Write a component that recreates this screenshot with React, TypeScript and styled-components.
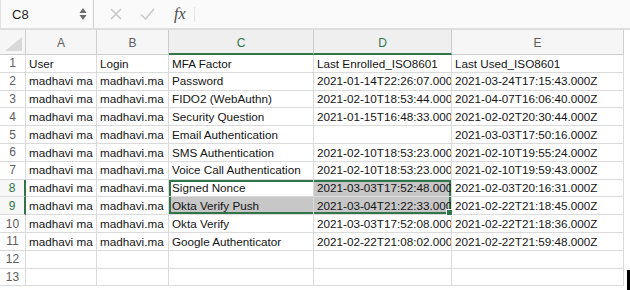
import React from "react";
import styled, {createGlobalStyle, css} from "styled-components";

const GlobalStyle = createGlobalStyle`
  body {
    margin: 0;
    background: #ffffff;
    font-family: "Liberation Sans", Arial, sans-serif;
  }
`;

const GREEN = "#2f7549";
const GRID = "#dadada";
const HEAD_LINE = "#cdcdcd";

const Window = styled.div`
  width: 630px;
  height: 290px;
  overflow: hidden;
  display: flex;
  flex-direction: column;
  background: #ffffff;
`;

const FormulaBar = styled.div`
  display: flex;
  align-items: stretch;
  height: 28px;
  background: #fafafa;
  border-bottom: 2px solid #dedede;
  box-sizing: content-box;
`;

const NameBox = styled.div`
  width: 94px;
  box-sizing: border-box;
  display: flex;
  align-items: center;
  justify-content: space-between;
  padding: 0 6px 0 11px;
  border-left: 1px solid #e2e2e2;
  border-right: 1px solid #cfcfcf;
  font-size: 13px;
  color: #1f1f1f;
`;

const Stepper = styled.svg`
  display: block;
`;

const Actions = styled.div`
  display: flex;
  align-items: center;
  gap: 18px;
  padding: 0 0 0 16px;
`;

const FaintIcon = styled.svg`
  display: block;
`;

const Fx = styled.span`
  font-family: "Liberation Serif", "Times New Roman", serif;
  font-style: italic;
  font-size: 16px;
  color: #4a4a4a;
  margin-left: 1px;
`;

const Divider = styled.div`
  width: 1px;
  height: 15px;
  align-self: center;
  background: #e4e4e4;
  margin-left: 8px;
`;

const FormulaInput = styled.div`
  flex: 1;
`;

const Sheet = styled.div`
  display: flex;
  align-items: flex-start;
`;

const Grid = styled.div`
  display: grid;
  grid-template-columns: 26px 71px 72px 145px 138px 172px;
  grid-template-rows: 25px repeat(13, 17.8px);
  font-size: 11.7px;
  color: #141414;
`;

const Corner = styled.div`
  background: #f6f6f6;
  border-right: 1px solid ${HEAD_LINE};
  border-bottom: 1px solid ${HEAD_LINE};
  display: flex;
  align-items: flex-end;
  justify-content: flex-end;
  padding: 0 3px 3px 0;
`;

const ColHeader = styled.div<{ $active?: boolean }>`
  background: ${p => (p.$active ? "#efefef" : "#f6f6f6")};
  border-right: 1px solid ${HEAD_LINE};
  border-bottom: 1px solid ${HEAD_LINE};
  display: flex;
  align-items: center;
  justify-content: center;
  color: ${p => (p.$active ? GREEN : "#5e5e5e")};
  font-size: 12px;
  padding-top: 2px;
  ${p => p.$active && css`
    border-bottom: 2px solid ${GREEN};
  `}
`;

const RowHeader = styled.div<{ $active?: boolean }>`
  border-right: 1px solid ${GRID};
  border-bottom: 1px solid ${GRID};
  display: flex;
  align-items: center;
  justify-content: center;
  font-size: 12px;
  color: ${p => (p.$active ? GREEN : "#5e5e5e")};
  background: ${p => (p.$active ? "#f7f7f7" : "#ffffff")};
  ${p => p.$active && css`
    border-right: 2px solid ${GREEN};
  `}
`;

type Edges = { top?: boolean; bottom?: boolean; left?: boolean; right?: boolean };

const edgeShadow = (e?: Edges) => {
  if (!e) return "none";
  const parts: string[] = [];
  if (e.top) parts.push(`inset 0 2px 0 ${GREEN}`);
  if (e.bottom) parts.push(`inset 0 -2px 0 ${GREEN}`);
  if (e.left) parts.push(`inset 2px 0 0 ${GREEN}`);
  if (e.right) parts.push(`inset -2px 0 0 ${GREEN}`);
  return parts.length ? parts.join(", ") : "none";
};

const Cell = styled.div<{ $shaded?: boolean; $edges?: Edges }>`
  position: relative;
  border-right: 1px solid ${GRID};
  border-bottom: 1px solid ${GRID};
  background: ${p => (p.$shaded ? "#c7c7c7" : "#ffffff")};
  box-shadow: ${p => edgeShadow(p.$edges)};
  white-space: nowrap;
  overflow: hidden;
  padding: 0 0 0 3px;
  display: flex;
  align-items: center;
  line-height: 1;
`;

const FillHandle = styled.span`
  position: absolute;
  right: -1px;
  bottom: -1px;
  width: 5px;
  height: 5px;
  background: ${GREEN};
  border: 1px solid #ffffff;
  z-index: 2;
`;

const HandleSlot = styled.div`
  position: relative;
  overflow: visible;
`;

const Caret = styled.div`
  width: 3px;
  height: 20px;
  background: #000000;
  margin: 240px 0 0 3px;
`;

const columns = ["A", "B", "C", "D", "E"];

const rows: string[][] = [
  ["User", "Login", "MFA Factor", "Last Enrolled_ISO8601", "Last Used_ISO8601"],
  ["madhavi ma", "madhavi.ma", "Password", "2021-01-14T22:26:07.000Z", "2021-03-24T17:15:43.000Z"],
  ["madhavi ma", "madhavi.ma", "FIDO2 (WebAuthn)", "2021-02-10T18:53:44.000Z", "2021-04-07T16:06:40.000Z"],
  ["madhavi ma", "madhavi.ma", "Security Question", "2021-01-15T16:48:33.000Z", "2021-02-02T20:30:44.000Z"],
  ["madhavi ma", "madhavi.ma", "Email Authentication", "", "2021-03-03T17:50:16.000Z"],
  ["madhavi ma", "madhavi.ma", "SMS Authentication", "2021-02-10T18:53:23.000Z", "2021-02-10T19:55:24.000Z"],
  ["madhavi ma", "madhavi.ma", "Voice Call Authentication", "2021-02-10T18:53:23.000Z", "2021-02-10T19:59:43.000Z"],
  ["madhavi ma", "madhavi.ma", "Signed Nonce", "2021-03-03T17:52:48.000Z", "2021-02-03T20:16:31.000Z"],
  ["madhavi ma", "madhavi.ma", "Okta Verify Push", "2021-03-04T21:22:33.000Z", "2021-02-22T21:18:45.000Z"],
  ["madhavi ma", "madhavi.ma", "Okta Verify", "2021-03-03T17:52:08.000Z", "2021-02-22T21:18:36.000Z"],
  ["madhavi ma", "madhavi.ma", "Google Authenticator", "2021-02-22T21:08:02.000Z", "2021-02-22T21:59:48.000Z"],
  ["", "", "", "", ""],
  ["", "", "", "", ""],
];

// selection C8:D9, active cell C8
const selRows = [7, 8];
const selCols = [2, 3];

function cellProps(r: number, c: number) {
  const inRow = selRows.includes(r);
  const inCol = selCols.includes(c);
  if (!inRow || !inCol) return {};
  const active = r === selRows[0] && c === selCols[0];
  return {
    $shaded: !active,
    $edges: {
      top: r === selRows[0],
      bottom: r === selRows[selRows.length - 1],
      left: c === selCols[0],
      right: c === selCols[selCols.length - 1],
    },
  };
}

export default function App() {
  return (
    <Window>
      <GlobalStyle/>
      <FormulaBar>
        <NameBox>
          <span>C8</span>
          <Stepper width="8" height="14" viewBox="0 0 8 14">
            <polygon points="4,1 7.5,6 0.5,6" fill="#6b6b6b"/>
            <polygon points="0.5,8 7.5,8 4,13" fill="#6b6b6b"/>
          </Stepper>
        </NameBox>
        <Actions>
          <FaintIcon width="12" height="12" viewBox="0 0 12 12">
            <path d="M1 1 L11 11 M11 1 L1 11" stroke="#c9c9c9" strokeWidth="1.6" fill="none"/>
          </FaintIcon>
          <FaintIcon width="15" height="12" viewBox="0 0 15 12">
            <path d="M1 6.5 L5.5 11 L14 1" stroke="#c9c9c9" strokeWidth="1.6" fill="none"/>
          </FaintIcon>
          <Fx>fx</Fx>
        </Actions>
        <Divider/>
        <FormulaInput/>
      </FormulaBar>
      <Sheet>
        <Grid>
          <Corner>
            <svg width="17" height="14" viewBox="0 0 17 14">
              <polygon points="0,14 17,14 17,0" fill="#d9d9d9"/>
            </svg>
          </Corner>
          {columns.map((c, i) => (
            <ColHeader key={c} $active={selCols.includes(i)}>{c}</ColHeader>
          ))}
          {rows.map((row, r) => (
            <React.Fragment key={r}>
              <RowHeader $active={selRows.includes(r)}>{r + 1}</RowHeader>
              {row.map((value, c) => {
                const isHandle = r === selRows[selRows.length - 1] && c === selCols[selCols.length - 1];
                if (isHandle) {
                  return (
                    <HandleSlot key={c}>
                      <Cell {...cellProps(r, c)} style={{height: "100%", boxSizing: "border-box"}}>{value}</Cell>
                      <FillHandle/>
                    </HandleSlot>
                  );
                }
                return <Cell key={c} {...cellProps(r, c)}>{value}</Cell>;
              })}
            </React.Fragment>
          ))}
        </Grid>
        <Caret/>
      </Sheet>
    </Window>
  );
}
